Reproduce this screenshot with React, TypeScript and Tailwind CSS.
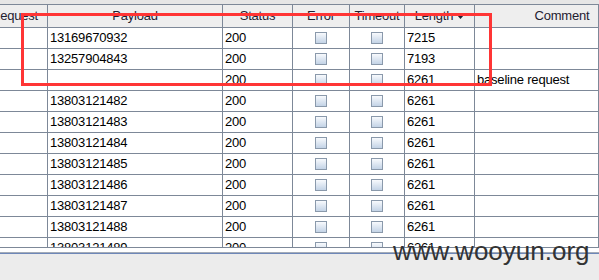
import React from "react";

const rows: { p: string; s: string; l: string; c: string }[] = [
  { p: "13169670932", s: "200", l: "7215", c: "" },
  { p: "13257904843", s: "200", l: "7193", c: "" },
  { p: "", s: "200", l: "6261", c: "baseline request" },
  { p: "13803121482", s: "200", l: "6261", c: "" },
  { p: "13803121483", s: "200", l: "6261", c: "" },
  { p: "13803121484", s: "200", l: "6261", c: "" },
  { p: "13803121485", s: "200", l: "6261", c: "" },
  { p: "13803121486", s: "200", l: "6261", c: "" },
  { p: "13803121487", s: "200", l: "6261", c: "" },
  { p: "13803121488", s: "200", l: "6261", c: "" },
  { p: "13803121489", s: "200", l: "6261", c: "" },
];

const grid =
  "grid grid-cols-[48px_175px_70px_57px_55px_70px_124px]";

function Box() {
  return (
    <div className="w-[12px] h-[12px] border border-[#8a99ab] bg-gradient-to-b from-[#f8fafd] to-[#c3d3e6]" />
  );
}

export default function App() {
  return (
    <div
      className="relative w-[599px] h-[280px] overflow-hidden bg-[#ececec] text-[13px] tracking-[-0.2px] text-black"
      style={{ fontFamily: '"Liberation Sans", Arial, sans-serif' }}
    >
      <div className="h-[4px] bg-[#e6e6e6]" />
      <div className="h-[244px] overflow-hidden bg-white border-t border-b border-[#7d8898]">
        {/* header */}
        <div className={`${grid} h-[23px] bg-[#eeeeee] border-b border-[#7d8898] text-[#1e2030]`}>
          <div className="border-r border-[#7d8898] overflow-hidden flex items-center whitespace-nowrap">
            <span className="ml-[-9px]">Request</span>
          </div>
          <div className="border-r border-[#7d8898] flex items-center justify-center">Payload</div>
          <div className="border-r border-[#7d8898] flex items-center justify-center">Status</div>
          <div className="border-r border-[#7d8898] flex items-center justify-center">Error</div>
          <div className="border-r border-[#7d8898] flex items-center justify-center overflow-hidden whitespace-nowrap">Timeout</div>
          <div className="border-r border-[#7d8898] flex items-center justify-center gap-[4px]">
            <span>Length</span>
            <svg width="7" height="4" viewBox="0 0 7 4" className="mt-[1px]">
              <polygon points="0,0 7,0 3.5,4" fill="#1e2030" />
            </svg>
          </div>
          <div className="border-r border-[#7d8898] flex items-center justify-center pl-[51px] whitespace-nowrap overflow-hidden">Comment</div>
        </div>
        {rows.map((r, i) => (
          <div key={i} className={`${grid} h-[21px] border-b border-[#7d8898]`}>
            <div className="border-r border-[#7d8898]" />
            <div className="border-r border-[#7d8898] flex items-center pl-[2px]">{r.p}</div>
            <div className="border-r border-[#7d8898] flex items-center pl-[2px]">{r.s}</div>
            <div className="border-r border-[#7d8898] flex items-center justify-center"><Box /></div>
            <div className="border-r border-[#7d8898] flex items-center justify-center"><Box /></div>
            <div className="border-r border-[#7d8898] flex items-center pl-[2px]">{r.l}</div>
            <div className="border-r border-[#7d8898] flex items-center pl-[2px] whitespace-nowrap">{r.c}</div>
          </div>
        ))}
      </div>
      <div className="h-[4px] bg-white" />
      <div className="h-[1px] bg-[#a4acb8]" />
      <div className="h-[1px] bg-[#6d87b8]" />

      <div className="absolute left-[21px] top-[13px] w-[471px] h-[73px] border-[3px] border-[#ff3535] pointer-events-none" />
      <div className="absolute left-[393px] top-[238px] text-[26px] tracking-normal leading-none text-[#333333] whitespace-nowrap">
        www.wooyun.org
      </div>
    </div>
  );
}
